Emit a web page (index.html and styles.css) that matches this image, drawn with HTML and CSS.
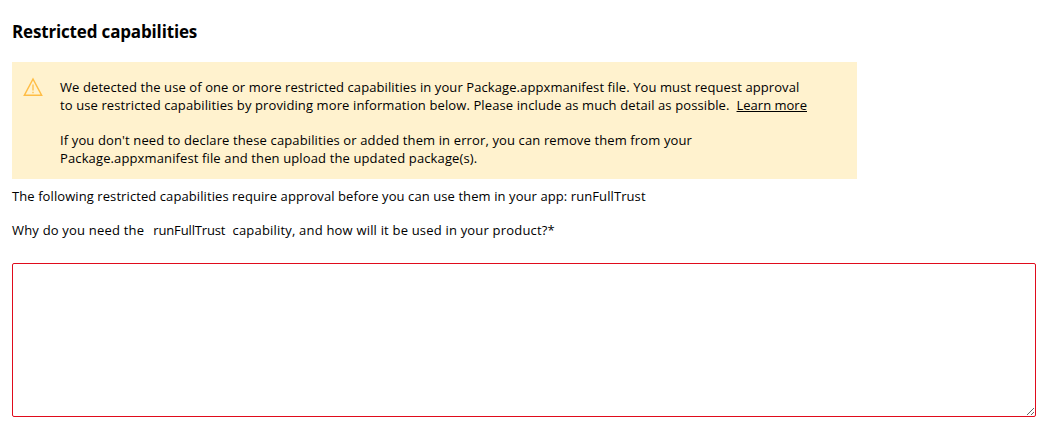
FILE: index.html
```html
<!DOCTYPE html>
<html lang="en">
<head>
<meta charset="utf-8">
<title>Restricted capabilities</title>
<link rel="stylesheet" href="styles.css">
</head>
<body>
<main class="section">
  <h2 class="heading">Restricted capabilities</h2>
  <div class="alert">
    <svg class="alert-icon" viewBox="0 0 20 20" aria-hidden="true">
      <path d="M10 2 L18.6 18.2 H1.4 Z"/>
      <path class="mark" d="M10 7.5 V13.5 M10 14.8 V16.2"/>
    </svg>
    <div class="alert-body">
      <p class="line"><span class="detected">We detected the use of one or more restricted capabilities in your Package.appxmanifest file. You must request approval</span><br><span class="request">to use restricted capabilities by providing more information below. Please include as much detail as possible.<a class="link" href="#">Learn more</a></span></p>
      <p class="line">If you don't need to declare these capabilities or added them in error, you can remove them from your<br>Package.appxmanifest file and then upload the updated package(s).</p>
    </div>
  </div>
  <p class="text">The following restricted capabilities require approval before you can use them in your app: runFullTrust</p>
  <label class="text question" for="reason">Why do you need the&nbsp; <span class="capability">runFullTrust</span>&nbsp; capability, and how will it be used in your product?*</label>
  <textarea class="reason" id="reason"></textarea>
</main>
</body>
</html>
```
FILE: styles.css
```css
* { box-sizing: border-box; }
body { margin: 0; background: #fff; color: #000; font: 13px/18px "Open Sans", "Noto Sans", sans-serif; }
.section { padding: 20px 7px 0 12px; display: flex; flex-direction: column; }
.heading { margin: 0 0 18px; font-size: 17px; line-height: 24px; font-weight: 700; letter-spacing: -0.16px; }
.alert { width: 845px; height: 117px; background: #fff2ce; display: flex; padding: 16px 0 0 11px; }
.alert-icon { width: 20px; height: 20px; margin: -1px 17px 0 0; fill: none; stroke: #ffbd45; stroke-width: 1.5; }
.mark { stroke-width: 1.3; }
.line { margin: 0 0 17px; white-space: nowrap; letter-spacing: 0.125px; }
.detected { letter-spacing: 0.09px; }
.request { letter-spacing: 0.11px; }
.link { color: #000; margin-left: 7px; letter-spacing: 0; }
.text { margin: 8px 0 0; white-space: nowrap; letter-spacing: 0.085px; }
.question { margin-top: 16px; letter-spacing: 0.19px; }
.capability { letter-spacing: -0.14px; margin-left: 2px; }
.reason { width: 1024px; height: 154px; margin: 24px 0 0; border: 1px solid #e00b1c; border-radius: 2px; outline: 0; background: #fff; }
```
